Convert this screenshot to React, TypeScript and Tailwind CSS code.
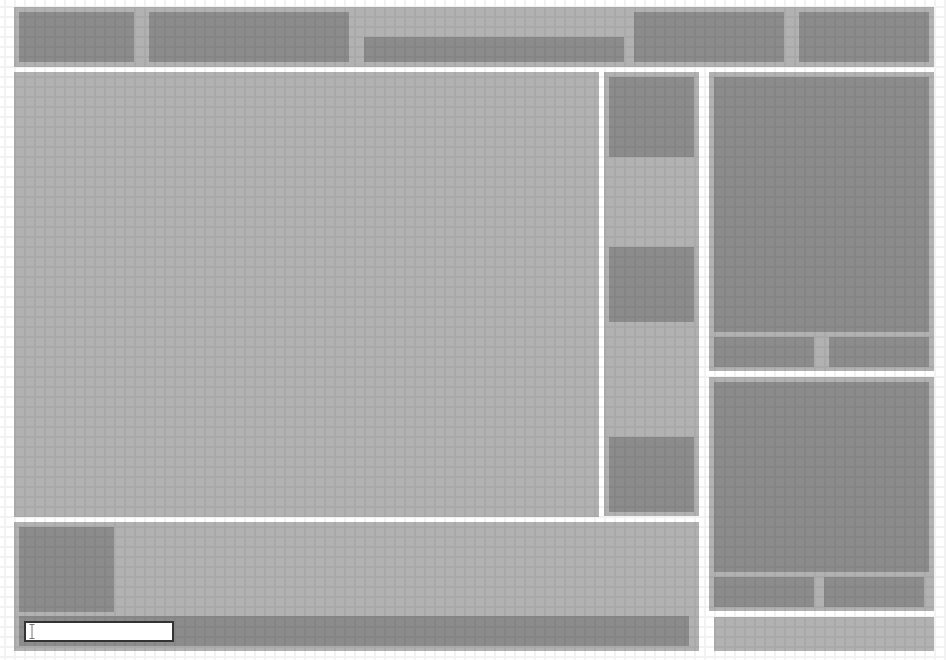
export default function App() {
  const panel = "bg-black/30"
  const box = "bg-black/[0.21]"
  return (
    <div className="w-[946px] h-[660px] overflow-hidden bg-white bg-[linear-gradient(#f2f2f2_2px,transparent_2px),linear-gradient(90deg,#f2f2f2_2px,transparent_2px)] bg-[size:10px_10px] bg-[position:4px_6px] pl-[14px] pt-[7px] flex flex-col gap-[5px]">
      {/* top bar */}
      <div className={`w-[920px] h-[60px] ${panel} flex p-[5px]`}>
        <div className={`w-[115px] h-[50px] ${box}`} />
        <div className={`ml-[15px] w-[200px] h-[50px] ${box}`} />
        <div className={`ml-[15px] w-[260px] h-[25px] self-end ${box}`} />
        <div className={`ml-[10px] w-[150px] h-[50px] ${box}`} />
        <div className={`ml-[15px] w-[130px] h-[50px] ${box}`} />
      </div>

      <div className="flex gap-[10px]">
        {/* left column */}
        <div className="w-[685px] flex flex-col gap-[5px]">
          <div className="flex gap-[5px]">
            <div className={`w-[585px] h-[445px] ${panel}`} />
            <div className={`w-[95px] h-[444px] ${panel} flex flex-col px-[5px] pt-[5px]`}>
              <div className={`w-[85px] h-[80px] ${box}`} />
              <div className={`mt-[90px] w-[85px] h-[75px] ${box}`} />
              <div className={`mt-[115px] w-[85px] h-[75px] ${box}`} />
            </div>
          </div>
          <div className={`h-[129px] ${panel} flex flex-col px-[5px] pt-[5px] gap-[4px]`}>
            <div className={`w-[95px] h-[85px] ${box}`} />
            <div className={`w-[670px] h-[30px] ${box} p-[5px]`}>
              <div className="w-[150px] h-[21px] bg-white border-2 border-[#333] flex items-center pl-[3px]">
                <svg width="6" height="15" viewBox="0 0 6 15" className="text-[#777]">
                  <path d="M0.5 0.5h5M3 0.5v14M0.5 14.5h5" stroke="currentColor" strokeWidth="1" fill="none" />
                </svg>
              </div>
            </div>
          </div>
        </div>

        {/* right column */}
        <div className="w-[225px] flex flex-col gap-[6px]">
          <div className={`h-[299px] ${panel} flex flex-col px-[5px] pt-[5px] gap-[5px]`}>
            <div className={`h-[255px] ${box}`} />
            <div className="flex gap-[15px] h-[30px]">
              <div className={`w-[100px] ${box}`} />
              <div className={`w-[100px] ${box}`} />
            </div>
          </div>
          <div className={`h-[234px] ${panel} flex flex-col px-[5px] pt-[5px] gap-[5px]`}>
            <div className={`h-[190px] ${box}`} />
            <div className="flex gap-[10px] h-[30px]">
              <div className={`w-[100px] ${box}`} />
              <div className={`w-[100px] ${box}`} />
            </div>
          </div>
          <div className={`ml-[5px] w-[220px] h-[34px] ${panel}`} />
        </div>
      </div>
    </div>
  )
}
